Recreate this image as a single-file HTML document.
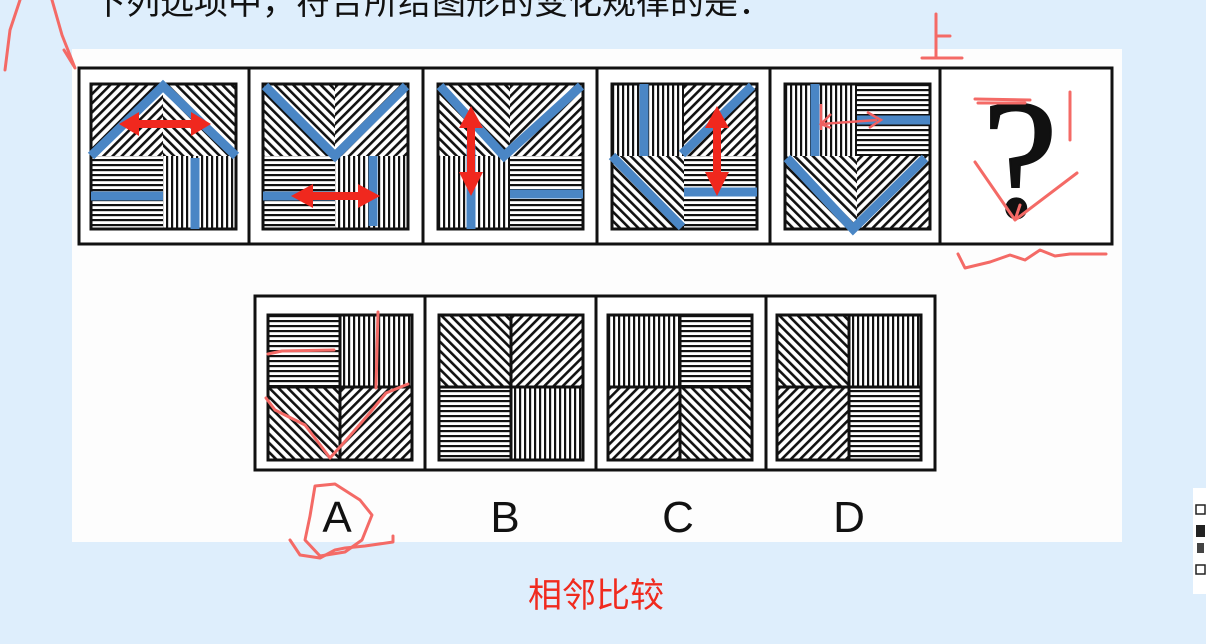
<!DOCTYPE html>
<html><head><meta charset="utf-8"><style>
html,body{margin:0;padding:0;width:1206px;height:644px;overflow:hidden;background:#deeefc;}
svg{display:block}
</style></head><body>
<svg width="1206" height="644" xmlns="http://www.w3.org/2000/svg">
<defs>
<pattern id="h" width="6" height="5" patternUnits="userSpaceOnUse"><rect width="6" height="5" fill="#fff"/><rect y="0" width="6" height="2.2" fill="#111"/></pattern>
<pattern id="v" width="5" height="6" patternUnits="userSpaceOnUse"><rect width="5" height="6" fill="#fff"/><rect x="0" width="2.2" height="6" fill="#111"/></pattern>
<pattern id="d1" width="6.5" height="6.5" patternUnits="userSpaceOnUse" patternTransform="rotate(45)"><rect width="6.5" height="6.5" fill="#fff"/><rect width="2.6" height="6.5" fill="#111"/></pattern>
<pattern id="d2" width="6.5" height="6.5" patternUnits="userSpaceOnUse" patternTransform="rotate(-45)"><rect width="6.5" height="6.5" fill="#fff"/><rect width="2.6" height="6.5" fill="#111"/></pattern>
</defs>

<text x="92" y="14" font-family="Liberation Sans, Noto Sans CJK SC, sans-serif" font-size="34" fill="#111">下列选项中，符合所给图形的变化规律的是：</text>

<rect x="72" y="49" width="1050" height="493" fill="#fdfdfd"/>

<rect x="79" y="68" width="1033" height="176" fill="#fff" stroke="#111" stroke-width="3"/>
<g stroke="#111" stroke-width="3">
<line x1="249" y1="68" x2="249" y2="244"/><line x1="423" y1="68" x2="423" y2="244"/>
<line x1="597" y1="68" x2="597" y2="244"/><line x1="770" y1="68" x2="770" y2="244"/>
<line x1="940" y1="68" x2="940" y2="244"/>
</g>

<g transform="translate(91,84)">
<rect width="72" height="72" fill="url(#d1)"/><rect x="72" width="73" height="72" fill="url(#d2)"/>
<rect y="72" width="72" height="73" fill="url(#h)"/><rect x="72" y="72" width="73" height="73" fill="url(#v)"/>
<rect width="145" height="145" fill="none" stroke="#111" stroke-width="3"/>
<g stroke="#4a86c5" stroke-width="9" fill="none"><polyline points="0,72 72,2 145,72"/><line x1="0" y1="112" x2="72" y2="112"/><line x1="104" y1="74" x2="104" y2="145"/></g>
<path d="M28,40 L48,28 L48,36 L100,36 L100,28 L120,40 L100,52 L100,44 L48,44 L48,52 Z" fill="#f0281e"/>
</g>
<g transform="translate(263,84)">
<rect width="72" height="72" fill="url(#d2)"/><rect x="72" width="73" height="72" fill="url(#d1)"/>
<rect y="72" width="72" height="73" fill="url(#h)"/><rect x="72" y="72" width="73" height="73" fill="url(#v)"/>
<rect width="145" height="145" fill="none" stroke="#111" stroke-width="3"/>
<g stroke="#4a86c5" stroke-width="9" fill="none"><polyline points="2,2 72,72 143,2"/><line x1="0" y1="112" x2="72" y2="112"/><line x1="110" y1="72" x2="110" y2="142"/></g>
<path d="M28,112 L50,100 L50,108 L95,108 L95,100 L117,112 L95,124 L95,116 L50,116 L50,124 Z" fill="#f0281e"/>
</g>
<g transform="translate(438,84)">
<rect width="72" height="72" fill="url(#d2)"/><rect x="72" width="73" height="72" fill="url(#d1)"/>
<rect y="72" width="72" height="73" fill="url(#v)"/><rect x="72" y="72" width="73" height="73" fill="url(#h)"/>
<rect width="145" height="145" fill="none" stroke="#111" stroke-width="3"/>
<g stroke="#4a86c5" stroke-width="9" fill="none"><polyline points="2,2 66,72 143,2"/><line x1="33" y1="60" x2="33" y2="145"/><line x1="72" y1="110" x2="145" y2="110"/></g>
<path d="M33,22 L45,44 L37,44 L37,88 L45,88 L33,112 L21,88 L29,88 L29,44 L21,44 Z" fill="#f0281e"/>
</g>
<g transform="translate(612,84)">
<rect width="72" height="72" fill="url(#v)"/><rect x="72" width="73" height="72" fill="url(#d1)"/>
<rect y="72" width="72" height="73" fill="url(#d2)"/><rect x="72" y="72" width="73" height="73" fill="url(#h)"/>
<rect width="145" height="145" fill="none" stroke="#111" stroke-width="3"/>
<g stroke="#4a86c5" stroke-width="9" fill="none"><line x1="32" y1="0" x2="32" y2="72"/><line x1="70" y1="70" x2="140" y2="2"/><line x1="0" y1="72" x2="70" y2="143"/><line x1="72" y1="108" x2="145" y2="108"/></g>
<path d="M105,22 L117,44 L109,44 L109,88 L117,88 L105,112 L93,88 L101,88 L101,44 L93,44 Z" fill="#f0281e"/>
</g>
<g transform="translate(785,84)">
<rect width="72" height="72" fill="url(#v)"/><rect x="72" width="73" height="72" fill="url(#h)"/>
<rect y="72" width="72" height="73" fill="url(#d2)"/><rect x="72" y="72" width="73" height="73" fill="url(#d1)"/>
<rect width="145" height="145" fill="none" stroke="#111" stroke-width="3"/>
<g stroke="#4a86c5" stroke-width="9" fill="none"><line x1="30" y1="0" x2="30" y2="72"/><line x1="72" y1="36" x2="145" y2="36"/><polyline points="2,74 68,145 140,74"/></g>
<g stroke="#f06060" stroke-width="2.5" fill="none"><path d="M36,40 L92,36"/><path d="M46,30 L36,40 L46,44"/><path d="M82,28 L96,36 L84,44"/><path d="M36,20 L36,46"/></g>
</g>
<text x="1020" y="216" text-anchor="middle" font-family="Liberation Serif, serif" font-size="170" fill="#111" stroke="#111" stroke-width="2">?</text>

<rect x="255" y="296" width="680" height="174" fill="#fff" stroke="#111" stroke-width="3"/>
<g stroke="#111" stroke-width="3"><line x1="425" y1="296" x2="425" y2="470"/><line x1="596" y1="296" x2="596" y2="470"/><line x1="766" y1="296" x2="766" y2="470"/></g>
<g transform="translate(268,315)">
<rect width="72" height="72" fill="url(#h)"/><rect x="72" width="72" height="72" fill="url(#v)"/>
<rect y="72" width="72" height="73" fill="url(#d2)"/><rect x="72" y="72" width="72" height="73" fill="url(#d1)"/>
<rect width="144" height="145" fill="none" stroke="#111" stroke-width="3"/></g>
<g transform="translate(439,315)">
<rect width="72" height="72" fill="url(#d2)"/><rect x="72" width="72" height="72" fill="url(#d1)"/>
<rect y="72" width="72" height="73" fill="url(#h)"/><rect x="72" y="72" width="72" height="73" fill="url(#v)"/>
<rect width="144" height="145" fill="none" stroke="#111" stroke-width="3"/></g>
<g transform="translate(608,315)">
<rect width="72" height="72" fill="url(#v)"/><rect x="72" width="72" height="72" fill="url(#h)"/>
<rect y="72" width="72" height="73" fill="url(#d1)"/><rect x="72" y="72" width="72" height="73" fill="url(#d2)"/>
<rect width="144" height="145" fill="none" stroke="#111" stroke-width="3"/></g>
<g transform="translate(777,315)">
<rect width="72" height="72" fill="url(#d2)"/><rect x="72" width="72" height="72" fill="url(#v)"/>
<rect y="72" width="72" height="73" fill="url(#d1)"/><rect x="72" y="72" width="72" height="73" fill="url(#h)"/>
<rect width="144" height="145" fill="none" stroke="#111" stroke-width="3"/></g>
<g stroke="#111" stroke-width="3"><line x1="340" y1="315" x2="340" y2="460"/><line x1="268" y1="387" x2="412" y2="387"/><line x1="511" y1="315" x2="511" y2="460"/><line x1="439" y1="387" x2="583" y2="387"/><line x1="680" y1="315" x2="680" y2="460"/><line x1="608" y1="387" x2="752" y2="387"/><line x1="849" y1="315" x2="849" y2="460"/><line x1="777" y1="387" x2="921" y2="387"/></g>

<g font-family="Liberation Sans, sans-serif" font-size="44" fill="#111" text-anchor="middle">
<text x="337" y="532">A</text><text x="505" y="532">B</text><text x="678" y="532">C</text><text x="849" y="532">D</text></g>

<text x="596" y="607" text-anchor="middle" font-family="Liberation Sans, Noto Sans CJK SC, sans-serif" font-size="34" fill="#f02a1e">相邻比较</text>

<g stroke="#f46a66" stroke-width="3" fill="none" stroke-linecap="round" stroke-linejoin="round">
<path d="M20,0 L10,30 L5,70"/><path d="M52,0 L62,35 L75,68 L64,50"/>
<path d="M936,14 L936,58 M936,36 L950,36 M922,58 L962,58"/>
<path d="M975,99 L1030,100 M978,103 L1025,103"/><path d="M1070,92 L1070,140"/>
<path d="M975,162 L1015,220 L1020,205 M1015,220 L1077,173"/>
<path d="M958,254 L965,268 L990,262 L1010,255 L1025,260 L1040,250 L1055,256 L1070,254 L1106,254"/>
<path d="M268,354 L282,351 L334,350"/><path d="M378,312 L376,388"/>
<path d="M266,398 L275,410 L305,425 L318,442 L330,458 L348,438 L368,415 L386,393 L408,384"/>
<path d="M310,516 L305,540 L320,556 L345,552 L362,540 L372,515 L360,500 L335,484 L315,486 L310,516"/>
<path d="M290,540 L300,555 L320,558 L335,550 L345,548 L365,546 L393,542 L393,536"/>
</g>

<rect x="1193" y="488" width="13" height="106" fill="#fff"/>
<g fill="none" stroke="#222" stroke-width="1.5"><rect x="1196" y="505" width="9" height="9"/><rect x="1196" y="565" width="9" height="9"/></g>
<rect x="1196" y="525" width="9" height="12" fill="#222"/><rect x="1197" y="543" width="7" height="10" fill="#444"/>
</svg>
</body></html>
